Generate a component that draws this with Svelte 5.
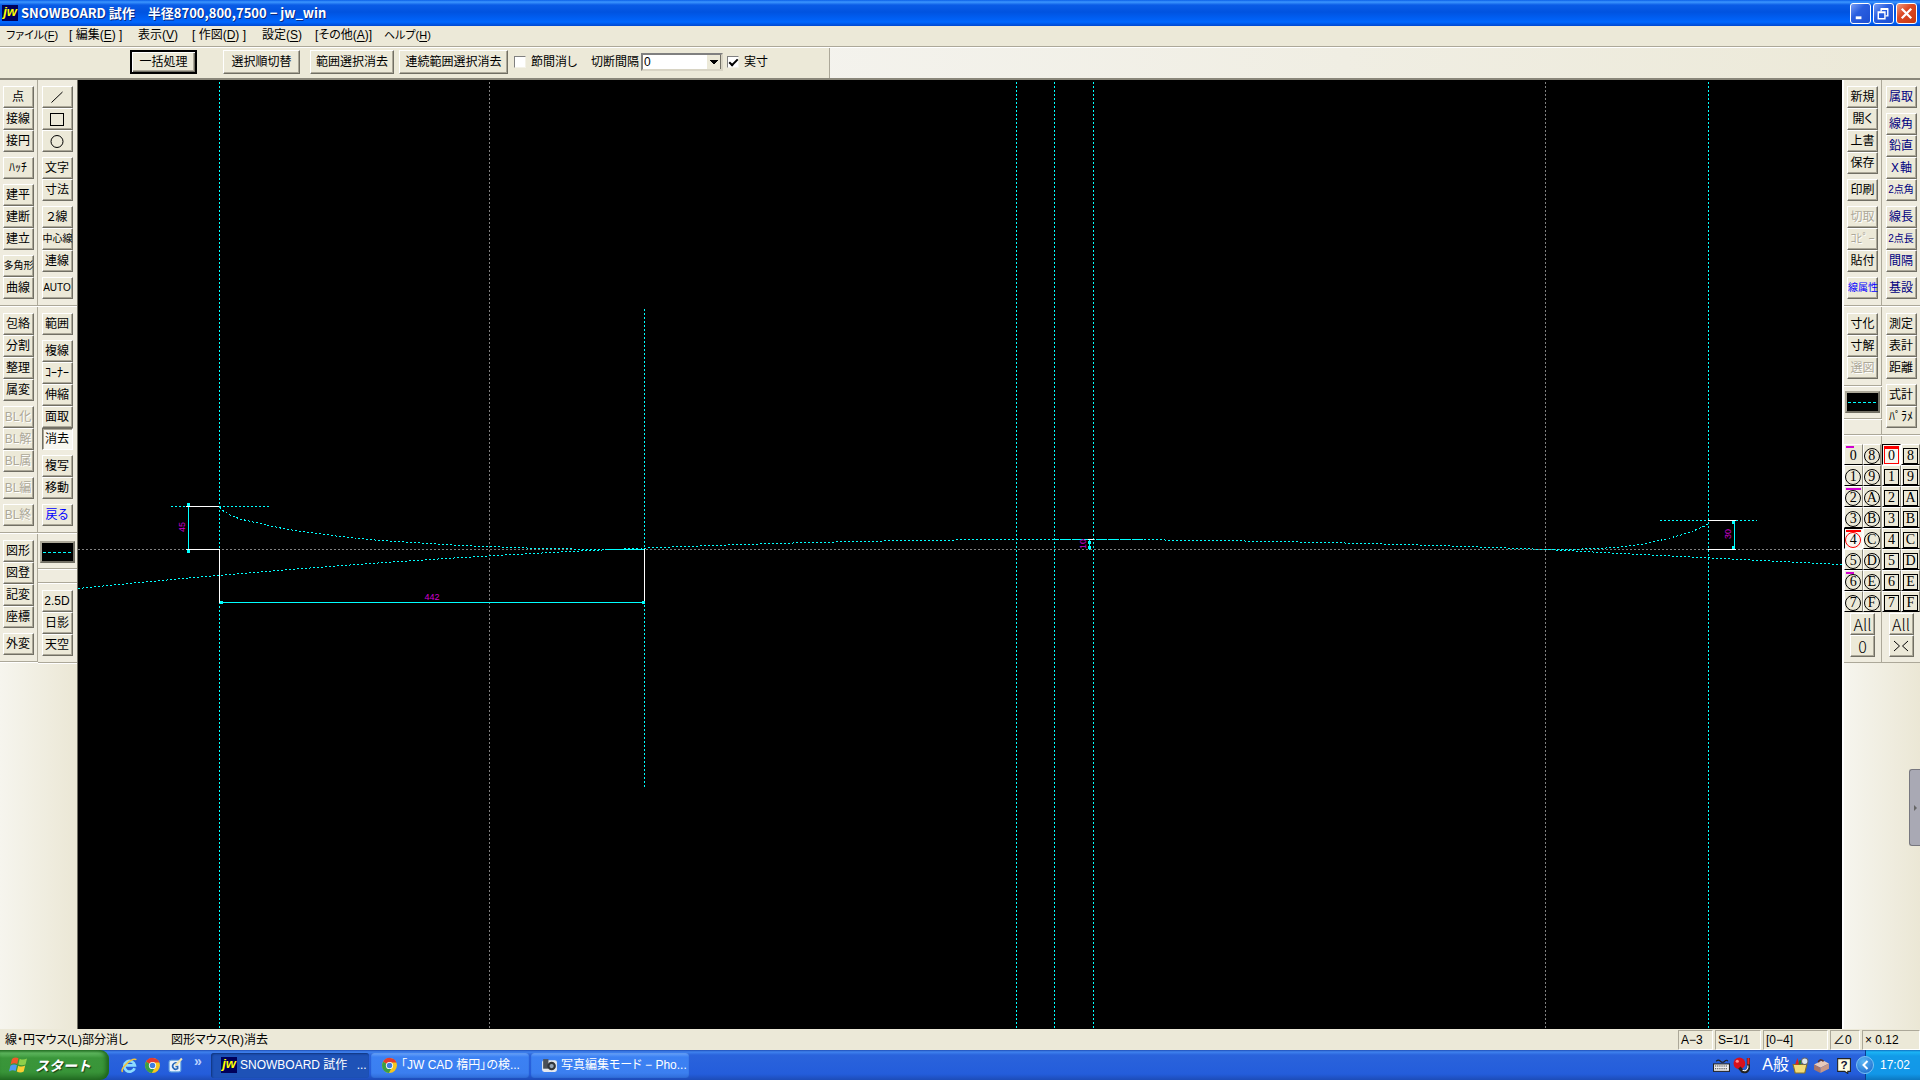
<script>
  const menus = [
    ['ファイル(', 'F', ')'],
    ['[ 編集(', 'E', ') ]'],
    ['表示(', 'V', ')'],
    ['[ 作図(', 'D', ') ]'],
    ['設定(', 'S', ')'],
    ['[その他(', 'A', ')]'],
    ['ヘルプ(', 'H', ')'],
  ];
  const off = (t) => ({ t, k: 'off' });
  const blue = (t) => ({ t, k: 'blue' });
  const navy = (t) => ({ t, k: 'navy' });
  const n = (t) => ({ t, k: '' });
  const line = { line: true };
  const small = ['多角形', '中心線', '線属性', 'AUTO', '2点角', '2点長'];

  const colA = [
    [[n('点'), n('接線'), n('接円')], [n('ﾊｯﾁ')], [n('建平'), n('建断'), n('建立')], [n('多角形'), n('曲線')]],
    [[n('包絡'), n('分割'), n('整理'), n('属変')], [off('BL化'), off('BL解'), off('BL属')], [off('BL編')], [off('BL終')]],
    [[n('図形'), n('図登'), n('記変'), n('座標')], [n('外変')]],
  ];
  const colB = [
    [[n('／'), n('□'), n('○')], [n('文字'), n('寸法')], [n('２線'), n('中心線'), n('連線')], [n('AUTO')]],
    [[n('範囲')], [n('複線'), n('ｺｰﾅｰ'), n('伸縮'), n('面取'), { t: '消去', k: 'down' }], [n('複写'), n('移動')], [blue('戻る')]],
    line,
    [[n('2.5D'), n('日影'), n('天空')]],
  ];
  const colC = [
    [[n('新規'), n('開く'), n('上書'), n('保存')], [n('印刷')], [off('切取'), off('ｺﾋﾟｰ'), n('貼付')], [blue('線属性')]],
    [[n('寸化'), n('寸解'), off('選図')]],
    line,
  ];
  const colD = [
    [[navy('属取')], [navy('線角'), navy('鉛直'), navy('Ｘ軸'), navy('2点角')], [navy('線長'), navy('2点長'), navy('間隔')], [navy('基設')]],
    [[n('測定'), n('表計'), n('距離')], [n('式計'), n('ﾊﾟﾗﾒ')]],
  ];
  const layers = ['0', '8', '1', '9', '2', 'A', '3', 'B', '4', 'C', '5', 'D', '6', 'E', '7', 'F'];
  const marks = { 0: 'half', 2: 'full', 6: 'half' };
  let real = $state(true);
  let gap = $state(false);
</script>

{#snippet column(sections)}
  {#each sections as s}
    {#if s.line}
      <div class="section linebox">
        <button class="pen" aria-label="線属性">
          <svg width="30" height="2"><path d="M0 1.500H30" stroke="#0ff" stroke-width="1" stroke-dasharray="3 2" shape-rendering="crispEdges" /></svg>
        </button>
      </div>
      <div class="section spacer"></div>
    {:else}
      <div class="section">
        {#each s as g}
          <div class="group">
            {#each g as b}
              <button class="tool {b.k}" class:tight={small.includes(b.t)} class:kana={b.t.charCodeAt(0) > 0xff60} disabled={b.k === 'off'} aria-label={b.t}>
                {#if b.t === '／'}
                  <svg width="16" height="16"><path d="M2.5 13.5L13.5 3" stroke="#000" fill="none" /></svg>
                {:else if b.t === '□'}
                  <svg width="16" height="16"><rect x="1.5" y="2.5" width="13" height="12" stroke="#000" fill="none" /></svg>
                {:else if b.t === '○'}
                  <svg width="16" height="16"><circle cx="8" cy="8.5" r="6" stroke="#000" fill="none" /></svg>
                {:else}{b.t}{/if}
              </button>
            {/each}
          </div>
        {/each}
      </div>
    {/if}
  {/each}
{/snippet}

{#snippet grid(round, active)}
  <div class="layers">
    <div class="cells">
      {#each layers as l}
        <button class="cell" class:active={l === active}>
          {#if round && marks[l]}<i class="mark {marks[l]}"></i>{/if}
          {#if l === active}<i class="mark red"></i>{/if}
          <span class:round class:bare={round && l === '0'}>{l}</span>
        </button>
      {/each}
    </div>
    <button class="all">All</button>
    {#if round}
      <button class="all">0</button>
    {:else}
      <button class="all" aria-label="反転"><svg width="16" height="12"><path d="M1 1L6.500 6L1 11M15 1L9.500 6L15 11" fill="none" stroke="#000" /></svg></button>
    {/if}
  </div>
{/snippet}

{#snippet jw()}
  <span class="jw">jw</span>
{/snippet}

{#snippet chrome()}
  <svg class="ico" viewBox="0 0 16 16">
    <circle cx="8" cy="8" r="7" fill="#f7c61c" />
    <path d="M8 8L2 4.4A7 7 0 0 1 14.6 5.2H8Z" fill="#e33b2e" />
    <path d="M8 8L2 4.4A7 7 0 0 0 7.4 15L10.4 9.6Z" fill="#3a9f45" />
    <circle cx="8" cy="8" r="3.4" fill="#fff" /><circle cx="8" cy="8" r="2.6" fill="#3f7ee0" />
  </svg>
{/snippet}

<div class="app">
  <header class="title">
    {@render jw()}
    <h1>SNOWBOARD 試作　半径8700,800,7500 − jw_win</h1>
    <div class="winbtns">
      <button aria-label="最小化"><svg viewBox="0 0 20 20"><path d="M5 14.5H11" stroke="#fff" stroke-width="3" /></svg></button>
      <button aria-label="元に戻す"><svg viewBox="0 0 20 20" fill="none" stroke="#fff"><path d="M7.5 8V5.5H14.5V12.5H12M7 5H15" stroke-width="1.5" /><path d="M4.5 8.5H11.5V15.5H4.5ZM4 9H12" stroke-width="1.5" /></svg></button>
      <button class="close" aria-label="閉じる"><svg viewBox="0 0 20 20"><path d="M5 5L15 15M15 5L5 15" stroke="#fff" stroke-width="2.4" /></svg></button>
    </div>
  </header>

  <nav class="menu">
    {#each menus as m}<button>{m[0]}<u>{m[1]}</u>{m[2]}</button>{/each}
  </nav>

  <div class="bar">
    <div class="controls">
      <button class="push default">一括処理</button>
      <button class="push order">選択順切替</button>
      <button class="push range">範囲選択消去</button>
      <button class="push chain">連続範囲選択消去</button>
      <label class="check"><input type="checkbox" bind:checked={gap} />節間消し</label>
      <label class="combo">切断間隔<select><option>0</option></select></label>
      <label class="check real"><input type="checkbox" bind:checked={real} />実寸</label>
    </div>
  </div>

  <main>
    <aside class="left">
      <div class="col">{@render column(colA)}</div>
      <div class="col">{@render column(colB)}</div>
    </aside>

    <section class="drawing" aria-label="作図画面">
      <svg width="100%" height="100%">
        <g transform="translate(-78 -80)" fill="none" stroke-width="1" shape-rendering="crispEdges">
          <g stroke="#808080" stroke-dasharray="2 2">
            <path d="M489.5 82V1029M1545.5 82V1029M78 549.5H1842" />
          </g>
          <g stroke="#0ff" stroke-dasharray="2 2">
            <path d="M219.5 82V1029M644.5 309V788M1016.5 82V1029M1054.5 82V1029M1093.5 82V1029M1708.5 82V1029M171 506.5H269M1660 520.5H1757" />
            <path d="M220 507L222 510L230 515L240 519L260 523.5L285 529L310 532.5L340 536.5L380 540.5L420 543L460 545.5L500 547L540 548.5L606 549.5" />
            <path d="M78 588.5Q566 539.5 1055 539.5Q1300 539.5 1545 549.5L1640 554.5L1842 564.5" />
            <path d="M1545 549.5Q1610 549.5 1640 544.5Q1690 535 1708 524" />
          </g>
          <path stroke="#0ff" stroke-dasharray="5 1" d="M1054 539.5H1144" />
          <path stroke="#0ff" d="M188.5 504V552M219 602.5H645M606 549.5H644M1734.5 521V549M1089.5 539V550" />
          <path stroke="#fff" d="M186 506.5H219M186 549.5H219.5V603M644.5 549V604M1708 520.5H1736M1708 549.5H1736M1088 539.5H1094" />
          <path stroke="#0ff" stroke-width="3" d="M220 602.5H223M642 602.5H645M187 504.5H190M187 551.5H190M1088 542H1091M1088 547H1091M1732 522.5H1735M1732 547.5H1735" />
        </g>
        <g transform="translate(-78 -80)" class="dims" text-anchor="middle">
          <text x="432" y="600">442</text>
          <text transform="translate(185 527) rotate(-90)">45</text>
          <text transform="translate(1731 534) rotate(-90)">30</text>
          <text transform="translate(1086 544) rotate(-90)">10</text>
        </g>
      </svg>
    </section>

    <aside class="right">
      <div class="col">{@render column(colC)}{@render grid(true, '4')}</div>
      <div class="col">{@render column(colD)}{@render grid(false, '0')}</div>
      <button class="handle" aria-label="開く"><svg width="5" height="8"><path d="M1 1L4 4L1 7Z" fill="#666" /></svg></button>
    </aside>
  </main>

  <footer class="status">
    <p>線・円マウス(L)部分消し</p>
    <p>図形マウス(R)消去</p>
    <div class="fields">
      <span>A−3</span><span>S=1/1</span><span>[0−4]</span><span>∠0</span><span>× 0.12</span>
    </div>
  </footer>

  <div class="taskbar">
    <button class="start">
      <svg width="20" height="20" viewBox="0 0 20 20">
        <path d="M3 4Q6 1.5 9.5 3.2L8.2 9Q5 7.500 1.600 9.500Z" fill="#f0582a" />
        <path d="M10.700 3.700Q14 5.500 18 3.500L16.500 9.500Q13 11 9.400 9.500Z" fill="#8ed04a" />
        <path d="M1.400 10.700Q4.500 8.700 8 10.200L6.600 16Q3.500 14.500 0 16.500Z" fill="#4f9af2" />
        <path d="M9.200 10.700Q12.500 12.500 16.200 10.600L14.700 16.500Q11.500 18.500 7.800 16.500Z" fill="#fbcf33" />
      </svg>
      スタート
    </button>
    <div class="quick">
      <svg class="ico" viewBox="0 0 16 16"><path d="M12.800 10.500A5 5 0 1 1 13 7.800H4.500" fill="none" stroke="#8edcff" stroke-width="2.600" /><path d="M1.500 14C-1 11 10 0 14.500 2.500" fill="none" stroke="#f3c33c" stroke-width="1.500" /></svg>
      {@render chrome()}
      <svg class="ico" viewBox="0 0 16 16"><rect x="2" y="3" width="11" height="11" rx="2" fill="#e8f3ff" stroke="#6aa8e0" /><path d="M10 6A3 3 0 1 0 10 11V9H8" fill="none" stroke="#2768b8" stroke-width="1.500" /><path d="M8 8L14 1.500" stroke="#f1e4b0" stroke-width="2" /></svg>
      <b>»</b>
    </div>
    <button class="task on">{@render jw()}SNOWBOARD 試作&ensp; ...</button>
    <button class="task">{@render chrome()}「JW CAD 楕円」の検...</button>
    <button class="task">
      <svg class="ico" viewBox="0 0 16 16"><rect x="1" y="3" width="14" height="11" rx="2" fill="#e6e9ee" /><rect x="2" y="2" width="5" height="9" fill="#4b5058" /><circle cx="10" cy="8.500" r="4" fill="#30343a" /><circle cx="10" cy="8.500" r="2" fill="#93a3b5" /></svg>
      写真編集モード − Pho...
    </button>
    <div class="tray">
      <svg class="ico" viewBox="0 0 16 16"><path d="M3 4Q5 2 7 4T11 4T14 4" fill="none" stroke="#222" /><rect x="0.500" y="6.500" width="15" height="7" fill="#eee" stroke="#222" /><path d="M2 8.500H14M2 11H14" stroke="#222" stroke-dasharray="1 1" /></svg>
      <svg class="ico ball" viewBox="0 0 16 16"><circle cx="6" cy="6" r="5.500" fill="#d8101c" /><circle cx="4" cy="4" r="1.500" fill="#ff8a8a" /><path d="M14.500 1V11Q13 15 9 13.500L6 10" fill="none" stroke="#222" stroke-width="3" /><path d="M14.500 1V7" stroke="#e22" stroke-width="2" /><path d="M14 8V10Q12.500 14 9 12.500" fill="none" stroke="#fff" /></svg>
      <span class="ime">A</span><span class="ime">般</span>
      <svg class="ico palette" viewBox="0 0 16 16"><path d="M1 7H14L12 15H3Z" fill="#f2dc78" stroke="#8b7424" /><path d="M3 7L5 1L7 7Z" fill="#d22" /><path d="M7 7L8 3" stroke="#282" stroke-width="2" /><circle cx="12" cy="4" r="3" fill="#dce6ee" stroke="#666" /></svg>
      <svg class="ico" viewBox="0 0 16 16"><path d="M1 7L9 3L15 6L7 10Z" fill="#e8c9ba" /><path d="M1 7V12L7 15V10Z" fill="#a87468" /><path d="M7 10L15 6V11L7 15Z" fill="#c89888" /><path d="M5 5Q6 1 10 4" fill="none" stroke="#533" stroke-width="1.500" /></svg>
      <svg class="ico help" viewBox="0 0 16 16"><path d="M2.500 1.500H14.500V13.500H12V15.500L9 13.500H2.500Z" fill="#fffde0" stroke="#222" /><text x="8.500" y="11.500" text-anchor="middle" font-size="11" font-weight="700" fill="#113">?</text></svg>
      <div class="clock"><button class="chev" aria-label="隠れているインジケータ"><svg width="8" height="10"><path d="M6.500 1L2.500 5L6.500 9" fill="none" stroke="#fff" stroke-width="2" /></svg></button>17:02</div>
    </div>
  </div>
</div>

<style>
  :global(body) { margin: 0; overflow: hidden; }
  * { box-sizing: border-box; }
  button, select, input { font: inherit; color: inherit; padding: 0; margin: 0; }
  button { white-space: nowrap; }
  .app {
    display: flex; flex-direction: column; height: 100vh; background: #ece9d8; color: #000;
    font: 12px/14px "Liberation Sans", "Noto Sans CJK JP", sans-serif; font-feature-settings: "palt";
  }
  .title {
    flex: none; display: flex; align-items: center; height: 26px; padding: 0 3px 0 2px; gap: 3px; color: #fff;
    background: linear-gradient(#0a5fe8 0, #3c96ff 2px, #0a5ce6 5px, #0053e0 12px, #0062f8 20px, #0068ff 22px, #0048d0 26px);
  }
  .title h1 { margin: 0; flex: 1; font: 700 13px/18px "Noto Sans CJK JP", sans-serif; font-feature-settings: normal; white-space: pre; text-shadow: 1px 1px 0 #0a2a80; }
  .jw {
    flex: none; width: 16px; height: 16px; overflow: hidden; text-align: center; color: #ff0; background: #00005a;
    font: italic 700 13px/14px "Liberation Sans", sans-serif;
  }
  .winbtns { display: flex; gap: 2px; }
  .winbtns button {
    width: 21px; height: 21px; border: 1px solid #fff; border-radius: 3px;
    background: linear-gradient(135deg, #7a9ef5, #2a5fe0 40%, #1c4fd2);
  }
  .winbtns .close { background: linear-gradient(135deg, #f09a80, #dc4a26 40%, #c8380f); }
  .winbtns svg { display: block; width: 19px; height: 19px; }

  .menu {
    flex: none; display: grid; grid-template-columns: 63px 69px 54px 70px 53px 69px auto; justify-content: start; align-content: start;
    height: 21px; padding: 1px 0 0 6px; border-bottom: 1px solid #aca899;
  }
  .menu button { height: 16px; border: 0; background: none; text-align: left; }
  .menu button:first-child, .menu button:last-child { font-size: 11px; }
  .menu u { text-underline-offset: 2px; }

  .bar {
    flex: none; display: flex; height: 33px; border-top: 1px solid #fff; border-bottom: 2px solid #8a877a;
    background: linear-gradient(90deg, #f4f3ee 40%, #ece9d8);
  }
  .controls { display: flex; align-items: center; padding: 0 61px 2px 130px; background: #ece9d8; border-right: 1px solid #aca899; }
  .push, .tool, .all {
    border: 1px solid; border-color: #fff #716f64 #716f64 #fff; border-radius: 0; background: #ece9d8;
    box-shadow: inset -1px -1px #aca899;
  }
  .push { height: 24px; width: 77px; }
  .default { width: 67px; margin-right: 26px; border: 2px solid #000; box-shadow: inset 1px 1px #fff, inset -1px -1px #716f64, inset -2px -2px #aca899; }
  .range { width: 84px; margin: 0 5px 0 10px; }
  .chain { width: 109px; margin-right: 6px; }
  .check, .combo { display: flex; align-items: center; white-space: nowrap; }
  .check { gap: 5px; width: 77px; }
  .check.real { width: auto; margin-left: 4px; }
  .check input {
    appearance: none; width: 12px; height: 12px; background: #fff; border: 1px solid; border-color: #808080 #f4f2e8 #f4f2e8 #808080;
    display: grid; place-items: center;
  }
  .check input:checked::after { content: ''; width: 7px; height: 3px; border: solid #000; border-width: 0 0 2px 2px; transform: translateY(-1px) rotate(-45deg); }
  .combo { width: 132px; justify-content: space-between; }
  .combo select {
    appearance: none; width: 82px; height: 18px; padding-left: 1px; border: 2px solid; border-color: #808080 #d8d4c4 #d8d4c4 #808080; border-radius: 0;
    background: linear-gradient(45deg, transparent 50%, #000 50%) right 7px top 5px / 4px 4px no-repeat, linear-gradient(-45deg, transparent 50%, #000 50%) right 3px top 5px / 4px 4px no-repeat, linear-gradient(90deg, #fff 1px, #ece9d8 1px 14px, #716f64 14px) right / 15px 100% no-repeat, #fff;
  }

  main { flex: 1; min-height: 0; display: grid; grid-template-columns: 78px 1fr 78px; }
  aside { display: grid; grid-template-columns: 38px 1fr; background: linear-gradient(90deg, #f6f5ee, #ebe7d5); border-right: 1px solid #716f64; }
  .right { position: relative; border-right: 0; border-left: 2px solid #fff; }
  .col { display: flex; flex-direction: column; align-items: stretch; }
  .col > :global(div) { background: #efecdf; }
  .col:first-child > :global(div) { border-right: 1px solid #aca899; }
  .section { flex: none; display: flex; flex-direction: column; align-items: center; gap: 5px; padding: 6px 0; border-bottom: 1px solid #aca899; box-shadow: 0 1px #fff; margin-bottom: 1px; }
  .left .section { padding-right: 1px; }
  .group { display: flex; flex-direction: column; }
  .tool { display: grid; place-items: center; align-content: center; width: 31px; height: 22px; line-height: 18px; }
  .tool.tight { font-size: 10px; }
  .tool.kana { font-feature-settings: normal; }
  .tool svg { display: block; }
  .off { color: #aca899; text-shadow: 1px 1px #fff; }
  .blue { color: #00f; }
  .navy { color: #000080; }
  .down { background: #f8f7f1; border-color: #716f64 #fff #fff #716f64; box-shadow: inset 1px 1px #aca899; }
  .left .linebox { padding: 7px 0 5px; }
  .right .linebox { padding: 4px 0 5px; }
  .pen { display: grid; place-items: center; width: 35px; height: 22px; background: #000; border: 2px solid; border-color: #aca899 #716f64 #716f64 #aca899; }
  .spacer { padding: 6px 0; }
  .right .spacer { padding: 7px 0; }

  .layers { display: flex; flex-direction: column; align-items: center; padding: 8px 0 5px; border-bottom: 1px solid #aca899; }
  .cells { display: grid; grid-template-columns: 1fr 1fr; align-self: stretch; margin-bottom: 1px; }
  .cell {
    position: relative; display: grid; place-items: center; height: 21px; padding-top: 2px; background: #ece9d8;
    border: 1px solid; border-color: #fff #8c897c #000 #fff;
    font: 14px/14px "Liberation Serif", serif;
  }
  .cell span { display: grid; place-items: center; width: 15px; height: 16px; border: 1px solid #000; }
  .cell .round { width: 16px; border-radius: 50%; }
  .cell .bare { border-color: transparent; }
  .cell.active { border-color: #000 #fff #fff #000; background: #f8f7f1; }
  .cell.active span { border-color: #f00; }
  .mark { position: absolute; top: 1px; left: 1px; height: 2px; width: 15px; background: #d000d0; }
  .mark.half { width: 8px; }
  .mark.red { background: #f00; }
  .all { display: grid; place-items: center; width: 25px; height: 22px; font: 300 16px/18px "Noto Sans CJK JP", sans-serif; }
  .handle {
    position: absolute; right: 0; top: 689px; width: 11px; height: 77px; display: grid; place-items: center;
    border: 1px solid #77777f; border-right: 0; border-radius: 3px 0 0 3px; background: #a9a9b4;
  }

  .drawing { background: #000; overflow: hidden; min-width: 0; }
  .drawing > svg { display: block; }
  .dims { font: 9px "Liberation Sans", sans-serif; fill: #d000d0; }

  .status { flex: none; display: grid; grid-template-columns: 166px 1fr auto; align-items: center; height: 21px; padding-left: 5px; white-space: nowrap; }
  .status p { margin: 0; padding-top: 1px; }
  .fields { display: grid; grid-template-columns: 35px 46px 65px 30px 58px; gap: 2px; height: 19px; }
  .fields span { padding: 1px 0 0 2px; line-height: 17px; border: 1px solid; border-color: #aca899 #fff #fff #aca899; }

  .taskbar {
    flex: none; display: flex; align-items: center; height: 30px; color: #fff;
    background: linear-gradient(#1f4fb8 0, #3f82ee 2px, #2a63dc 5px, #245ddb 24px, #1d4cb8);
  }
  .start {
    display: flex; align-items: center; gap: 6px; width: 109px; height: 30px; padding-left: 9px; border: 0; border-radius: 0 9px 9px 0; color: #fff;
    background: linear-gradient(#2c7a2c, #5fb85f 3px, #3a963a 8px, #389438 22px, #256f25);
    box-shadow: inset -3px 0 4px #1d641d; font: italic 700 14px/20px "Noto Sans CJK JP", sans-serif; text-shadow: 1px 1px 1px #143c14;
  }
  .quick { display: flex; align-items: center; gap: 6px; width: 102px; padding-left: 12px; }
  .quick b { align-self: flex-start; margin-left: 4px; font: 700 14px/8px "Liberation Sans", sans-serif; color: #b8d0ff; }
  .ico { flex: none; width: 17px; height: 17px; }
  .task {
    display: flex; align-items: center; gap: 3px; width: 158px; height: 25px; margin-right: 2px; padding-left: 10px; border: 0; border-radius: 3px;
    background: linear-gradient(#6aa4fa, #3c81f3 4px, #3b7ff0 20px, #2f6cd8); box-shadow: inset 0 0 1px #1f4fb0;
  }
  .task.on { background: #1e52b7; box-shadow: inset 1px 1px 2px #0f347c; }
  .tray { display: flex; align-items: center; margin-left: auto; height: 30px; }
  .ball { margin: 0 12px 0 3px; }
  .ime { font-size: 16px; line-height: 20px; }
  .palette { margin: 0 4px 0 3px; }
  .help { margin: 0 13px 0 5px; }
  .clock {
    position: relative; display: flex; align-items: center; width: 55px; height: 30px; padding-left: 14px;
    background: linear-gradient(#0f6fc0, #1cb5f5 2px, #129be8 6px, #1297e8 24px, #0c78c0); border-left: 1px solid #0a3e90;
  }
  .chev {
    position: absolute; left: -10px; top: 6px; display: grid; place-items: center; width: 18px; height: 18px; border: 1px solid #7cc4f5; border-radius: 50%;
    background: radial-gradient(circle at 40% 30%, #5cb8f5, #1460c8);
  }
</style>
